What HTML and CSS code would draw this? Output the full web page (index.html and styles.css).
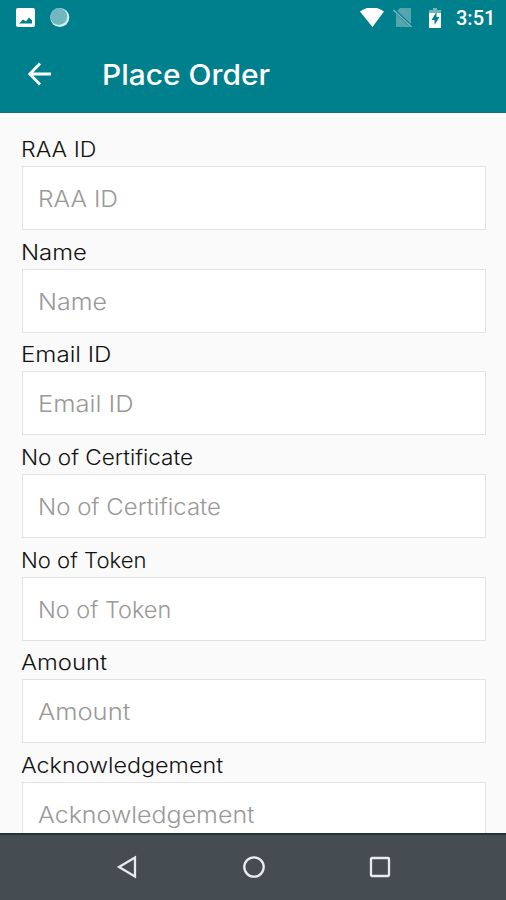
FILE: index.html
```
<!DOCTYPE html>
<html lang="en">
<head>
<meta charset="utf-8">
<title>Place Order</title>
<link rel="stylesheet" href="styles.css">
</head>
<body>
<div class="screen">
  <header class="top">
    <div class="status">
      <svg class="status-left" width="54" height="20" viewBox="0 0 54 20">
        <path fill="#fff" fill-rule="evenodd" d="M2 0h15a2 2 0 0 1 2 2v15a2 2 0 0 1-2 2H2a2 2 0 0 1-2-2V2a2 2 0 0 1 2-2zM3 15.500h13v-3l-3-3-3 4-3-2z"/>
        <circle cx="43.800" cy="9.500" r="9.500" fill="#d5f0f1"/>
        <circle cx="42.800" cy="8.500" r="8.500" fill="#72b7be"/>
      </svg>
      <svg class="status-right" width="84" height="24" viewBox="0 0 84 24">
        <path fill="#fff" d="M0 3.500Q12-5 24 3.500L12.500 19z"/>
        <path fill="#56a5ae" d="M40 0h11v19H36V4z"/>
        <path d="M33 1l19 18" stroke="#007f8c" stroke-width="3"/>
        <path d="M33.500 2l18 17" stroke="#7fbcc3" stroke-width="1.300"/>
        <path fill="#72b7be" d="M73 0h4v2h4v4H69V2h4z"/>
        <path fill="#fff" d="M69 5h12v15H69z"/>
        <path fill="#007f8c" d="M76.500 4l-5 8h3v5l5-8h-3z"/>
      </svg>
      <span class="clock">3:51</span>
    </div>
    <div class="appbar">
      <svg class="back" width="24" height="24" viewBox="0 0 24 24" fill="none" stroke="#fff" stroke-width="2.800"><path d="M13 1.500 2.800 12 13 22.500M2.800 12H24"/></svg>
      <h1>Place Order</h1>
    </div>
  </header>
  <main class="form">
    <div class="field raa"><div class="label">RAA ID</div><div class="input"><span>RAA ID</span></div></div>
    <div class="field name"><div class="label">Name</div><div class="input"><span>Name</span></div></div>
    <div class="field email"><div class="label">Email ID</div><div class="input"><span>Email ID</span></div></div>
    <div class="field cert"><div class="label">No of Certificate</div><div class="input"><span>No of Certificate</span></div></div>
    <div class="field token"><div class="label">No of Token</div><div class="input"><span>No of Token</span></div></div>
    <div class="field amount"><div class="label">Amount</div><div class="input"><span>Amount</span></div></div>
    <div class="field ack"><div class="label">Acknowledgement</div><div class="input"><span>Acknowledgement</span></div></div>
  </main>
  <nav class="navbar">
    <svg width="22" height="24" viewBox="0 0 22 24"><path d="M19 2.500v19L3 12z"/></svg>
    <svg width="24" height="24" viewBox="0 0 24 24"><circle cx="12" cy="12" r="9.700"/></svg>
    <svg width="22" height="24" viewBox="0 0 22 24"><rect x="2" y="3" width="18" height="18" rx="1"/></svg>
  </nav>
</div>
</body>
</html>
```
FILE: styles.css
```
* { box-sizing: border-box; }
body { margin: 0; }
.screen {
  width: 506px;
  height: 900px;
  display: flex;
  flex-direction: column;
  overflow: hidden;
  background: #fafafa;
  font-family: Inter, sans-serif;
}
.top {
  flex: none;
  height: 113px;
  background: #007f8c;
  border-bottom: 1px solid #19707b;
  color: #fff;
}
.status {
  height: 37px;
  padding: 8px 12px 0 16px;
  display: flex;
  align-items: flex-start;
}
.status-right { margin-left: auto; }
.clock {
  width: 38px;
  margin-left: 12px;
  font: 500 20px/21px Roboto, sans-serif;
}
.appbar {
  height: 75px;
  padding-left: 27px;
  display: flex;
  align-items: center;
}
.back { margin-bottom: 2px; }
h1 {
  margin: 0 0 0 51px;
  font-size: 28px;
  line-height: 34px;
  font-weight: 500;
  transform: scaleX(1.068);
  transform-origin: left;
}
.form {
  flex: 1;
  min-height: 0;
  overflow: hidden;
  padding: 22px 20.500px 0 21.500px;
}
.field { height: 102.700px; }
.label {
  height: 31px;
  margin-left: -0.500px;
  font-size: 21px;
  line-height: 29px;
  font-weight: 300;
  color: #111;
  white-space: nowrap;
  transform: scaleX(var(--label-stretch));
  transform-origin: left;
}
.input {
  height: 64px;
  padding: 2px 15.500px 0;
  border: 1.500px solid #e2e2e2;
  background: #fff;
  display: flex;
  align-items: center;
  font-size: 22.500px;
  line-height: 28px;
  font-weight: 300;
  color: #999;
  white-space: nowrap;
}
.input span {
  transform: scaleX(var(--hint-stretch));
  transform-origin: left;
}
.raa { --label-stretch: 1.100; --hint-stretch: 1.090; }
.name { --label-stretch: 1.135; --hint-stretch: 1.110; }
.email { --label-stretch: 1.150; --hint-stretch: 1.135; }
.cert { --label-stretch: 1.073; --hint-stretch: 1.065; }
.token { --label-stretch: 1.053; --hint-stretch: 1.043; }
.amount { --label-stretch: 1.135; --hint-stretch: 1.135; }
.ack { --label-stretch: 1.110; --hint-stretch: 1.110; }
.navbar {
  flex: none;
  height: 67px;
  padding: 0 115px 2px 116px;
  border-top: 2px solid #203436;
  background: #454d52;
  display: flex;
  align-items: center;
  justify-content: space-between;
  fill: none;
  stroke: #e8ecef;
  stroke-width: 2.300;
}
```
